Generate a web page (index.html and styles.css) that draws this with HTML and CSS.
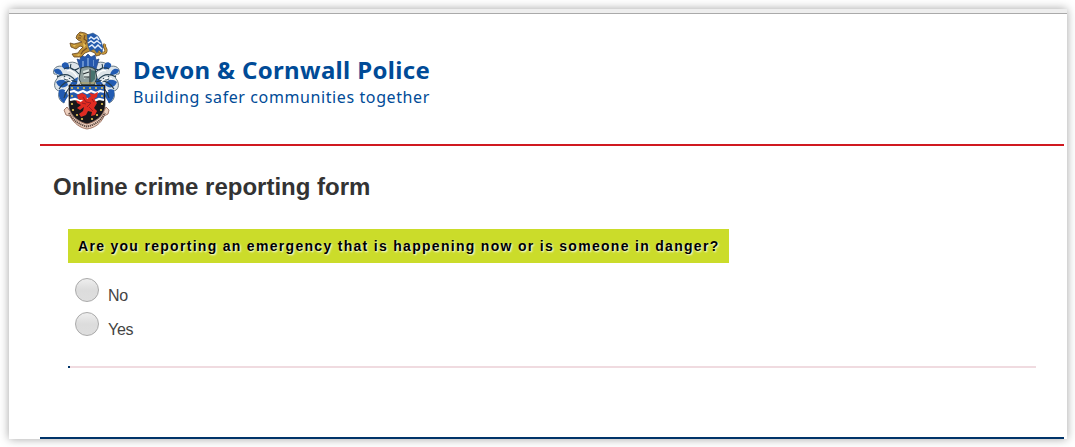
FILE: index.html
```
<!DOCTYPE html>
<html lang="en">
<head>
    <meta charset="UTF-8">
    <meta name="viewport" content="width=device-width, initial-scale=1.0">
    <title>Devon &amp; Cornwall Police - Online crime reporting form</title>
    <link rel="stylesheet" href="styles.css">
</head>
<body>
    <div class="window">
        <div class="header">
            <svg class="crest" viewBox="0 0 70 100" width="70" height="100">
                <!-- mantling, drawn once and mirrored -->
                <defs>
                    <g id="mantle">
                        <path fill="#dde4e9" stroke="#465b68" stroke-width=".8" d="M28 35C22 28 13 32 12 36C5 33 0 38 2 43C6 43 7 46 4 49C1 54 3 60 8 60C5 64 7 70 12 72C12 67 18 65 21 59L29 52Z"/>
                        <path fill="#225bb2" d="M10 33C14 29 18 33 17 38C12 39 9 36 10 33ZM2 39C6 36 10 39 11 44C6 44 2 42 2 39ZM4 51C9 47 15 49 16 54C12 58 6 57 4 51ZM7 59C12 57 15 60 16 65L12 72C7 69 6 63 7 59ZM19 50L26 46L25 53L18 58Z"/>
                        <path fill="none" stroke="#263f50" stroke-width="1.1" d="M12 38C17 35 23 38 27 43M5 46C12 42 18 43 23 49M7 58C11 52 17 48 25 51M12 67C13 61 17 58 19 53M19 33C17 38 22 41 27 37M13 45C10 48 15 51 18 47"/>
                        <path fill="none" stroke="#fff" stroke-width="1.2" d="M15 40C19 38 22 41 25 46M9 48C13 45 17 48 20 51M13 61C15 57 18 55 21 54"/>
                    </g>
                </defs>
                <use href="#mantle"/>
                <use href="#mantle" transform="translate(69 0) scale(-1 1)"/>
                <!-- crown and helmet -->
                <path fill="#2658ad" stroke="#244786" stroke-width=".7" d="M28 37L25 28L28 29L29 24L33 26L36 23L39 26L43 24L44 29L47 28L44 38Z"/>
                <path fill="#6690ce" d="M30 30H32V36H30ZM35 27H37V36H35ZM41 29H42V35H41Z"/>
                <path fill="#8f9f9e" stroke="#293d43" d="M29 37Q37 34 43 38L45 47L42 54H30L27 48Z"/>
                <path fill="#d8e2df" d="M31 40L38 38L38 45L32 48Z"/>
                <path fill="#46726e" d="M39 39L43 40L43 48L39 52Z"/>
                <path fill="none" stroke="#293034" stroke-width="1.2" d="M31 43L37 41M32 46L37 46M38 38V53"/>
                <path fill="none" stroke="#b9a55f" d="M28 52H44"/>
                <!-- lion and wing -->
                <path fill="#bd8f36" stroke="#65451f" stroke-width=".8" d="M25 4L28 1L33 2L38 5L41 10L46 16L49 20L48 24L44 25L43 22L38 20L33 22L29 26L22 26L20 23L26 22L28 19L31 16L28 15L24 18L19 16L18 12L22 13L26 12L30 11L26 9L24 7Z"/>
                <path fill="none" stroke="#65451f" stroke-width="3" d="M47 20C50 23 54 23 54 19C54 17 51 16 53 13"/>
                <path fill="none" stroke="#c7993c" stroke-width="1.8" d="M47 20C50 23 54 23 54 19C54 17 51 16 53 13"/>
                <path fill="none" stroke="#754d24" stroke-width="1.1" d="M27 4L30 5M26 7L29 7M33 4L32 8L35 10L33 14M35 17L31 20L29 23"/>
                <path fill="#e8c45f" d="M28 3L31 3L30 5ZM31 12L34 14L32 17ZM21 14L24 14L22 16ZM24 24L28 23L27 25Z"/>
                <path fill="#245bad" stroke="#315987" stroke-width=".5" d="M35 4L41 2L46 5L49 10L51 16L50 22L47 19L45 22L42 18L38 20L36 15Z"/>
                <path fill="none" stroke="#e4eefb" stroke-width="1.5" d="M37 8L39 6L42 8L45 6L47 9M36 12L39 10L42 12L45 10L49 13M37 16L40 14L43 17L46 14L50 18"/>
                <!-- shield -->
                <path fill="#17161a" stroke="#29282b" stroke-width=".7" d="M17 54H53V74C53 84 44 90 35 93C26 90 17 84 17 74Z"/>
                <path fill="#245aad" d="M18 55H52V68H18Z"/>
                <path fill="none" stroke="#fff" stroke-width="2.2" d="M18 61L22 60L26 62L31 60L35 62L39 60L44 62L48 60L52 61M18 69L23 68L28 70L35 68L42 70L47 68L52 69"/>
                <g fill="#e3c555">
                    <circle cx="20" cy="57" r="1.1"/><circle cx="26" cy="57" r="1.1"/><circle cx="32" cy="57" r="1.1"/>
                    <circle cx="38" cy="57" r="1.1"/><circle cx="44" cy="57" r="1.1"/><circle cx="50" cy="57" r="1.1"/>
                    <circle cx="20" cy="65" r="1.1"/><circle cx="50" cy="65" r="1.1"/>
                    <circle cx="20" cy="73" r="1.1"/><circle cx="50" cy="73" r="1.1"/>
                    <circle cx="21" cy="79" r="1.1"/><circle cx="49" cy="79" r="1.1"/>
                    <circle cx="25" cy="84" r="1.1"/><circle cx="45" cy="84" r="1.1"/>
                    <circle cx="30" cy="88" r="1.1"/><circle cx="40" cy="88" r="1.1"/>
                </g>
                <path fill="#df2b22" d="M25 64L30 62L34 64L35 68L39 65L37 62L42 63L46 61L45 66L42 68L45 72L42 77L45 80L43 84L39 85L40 81L36 80L34 84L29 86L27 83L31 80L32 76L28 79L25 77L29 74L25 72L24 69L29 71L31 69L26 68Z"/>
                <path fill="none" stroke="#951b20" stroke-width=".9" d="M31 66L34 71L39 72L35 76M40 68L42 71M37 76L41 80M30 72L34 73"/>
                <!-- motto ribbon -->
                <path fill="#edd0bf" stroke="#8a5c4a" stroke-width=".8" d="M15 76L12 79L14 84L18 85C22 93 29 97 35 98C42 97 49 93 52 85L56 83L57 79L54 76L52 80C49 87 43 91 35 93C27 91 21 87 18 80Z"/>
                <path fill="none" stroke="#604b43" stroke-width="2" stroke-dasharray="1.3 .7" d="M17 82C22 91 29 94 35 95.500C42 94 48 91 53 82"/>
            </svg>
            <div class="brand">
                <div class="brand-name">Devon &amp; Cornwall Police</div>
                <div class="brand-tagline">Building safer communities together</div>
            </div>
        </div>
        <div class="content">
            <h1>Online crime reporting form</h1>
            <form class="question">
                <div class="question-title">Are you reporting an emergency that is happening now or is someone in danger?</div>
                <label class="option"><input type="radio" name="emergency" value="no"><span>No</span></label>
                <label class="option"><input type="radio" name="emergency" value="yes"><span>Yes</span></label>
                <div class="progress"><div class="progress-bar"></div></div>
            </form>
        </div>
    </div>
</body>
</html>
```
FILE: styles.css
```
* {
    box-sizing: border-box;
}
body {
    margin: 0;
    padding: 9px 8px 8px 9px;
    height: 447px;
    overflow: hidden;
    background-color: #fff;
    font-family: "Liberation Sans", Arial, sans-serif;
    color: #333;
}
.window {
    height: 430px;
    padding: 5px 3px 0 31px;
    background: linear-gradient(#eee 4px, #aaa 4px, #aaa 5px, #fff 5px);
    box-shadow: 0 0 9px rgba(0, 0, 0, 0.36);
    display: flex;
    flex-direction: column;
}
.header {
    height: 132px;
    padding: 17px 0 0 12px;
    border-bottom: 2px solid #d01920;
    display: flex;
    align-items: flex-start;
}
.crest {
    flex: none;
}
.brand {
    padding: 24px 0 0 11px;
    font-family: "Noto Sans", "Open Sans", sans-serif;
    color: #004b97;
    white-space: nowrap;
}
.brand-name {
    font-size: 24px;
    line-height: 30px;
    font-weight: 700;
    letter-spacing: 0.34px;
}
.brand-tagline {
    font-size: 16px;
    line-height: 24px;
    letter-spacing: 0.6px;
}
.content {
    flex: 1;
    padding: 27px 28px 0 13px;
    border-bottom: 2px solid #003469;
}
h1 {
    margin: 0;
    font-size: 24px;
    line-height: 28px;
    font-weight: 700;
}
.question {
    margin: 28px 0 0 15px;
}
.question-title {
    width: 661px;
    height: 34px;
    margin-bottom: 12px;
    padding-left: 10px;
    background-color: #cbdc2a;
    color: #000;
    font-size: 14px;
    line-height: 34px;
    font-weight: 700;
    letter-spacing: 1.3px;
    text-shadow: 1px 1px 2px #fff;
    white-space: nowrap;
}
.option {
    height: 34px;
    padding-left: 7px;
    display: flex;
    align-items: flex-start;
    font-size: 16px;
    line-height: 18px;
    letter-spacing: -0.3px;
    color: #444;
}
.option input {
    appearance: none;
    width: 24px;
    height: 24px;
    margin: 3px 9px 0 0;
    border: 1px solid #aaa;
    border-radius: 50%;
    background: linear-gradient(#eee, #dcdcdc 50%, #dedede);
}
.option span {
    padding-top: 12px;
}
.progress {
    height: 2px;
    margin-top: 23px;
    background-color: #f0dbe0;
}
.progress-bar {
    width: 2px;
    height: 2px;
    background-color: #003469;
}
```
